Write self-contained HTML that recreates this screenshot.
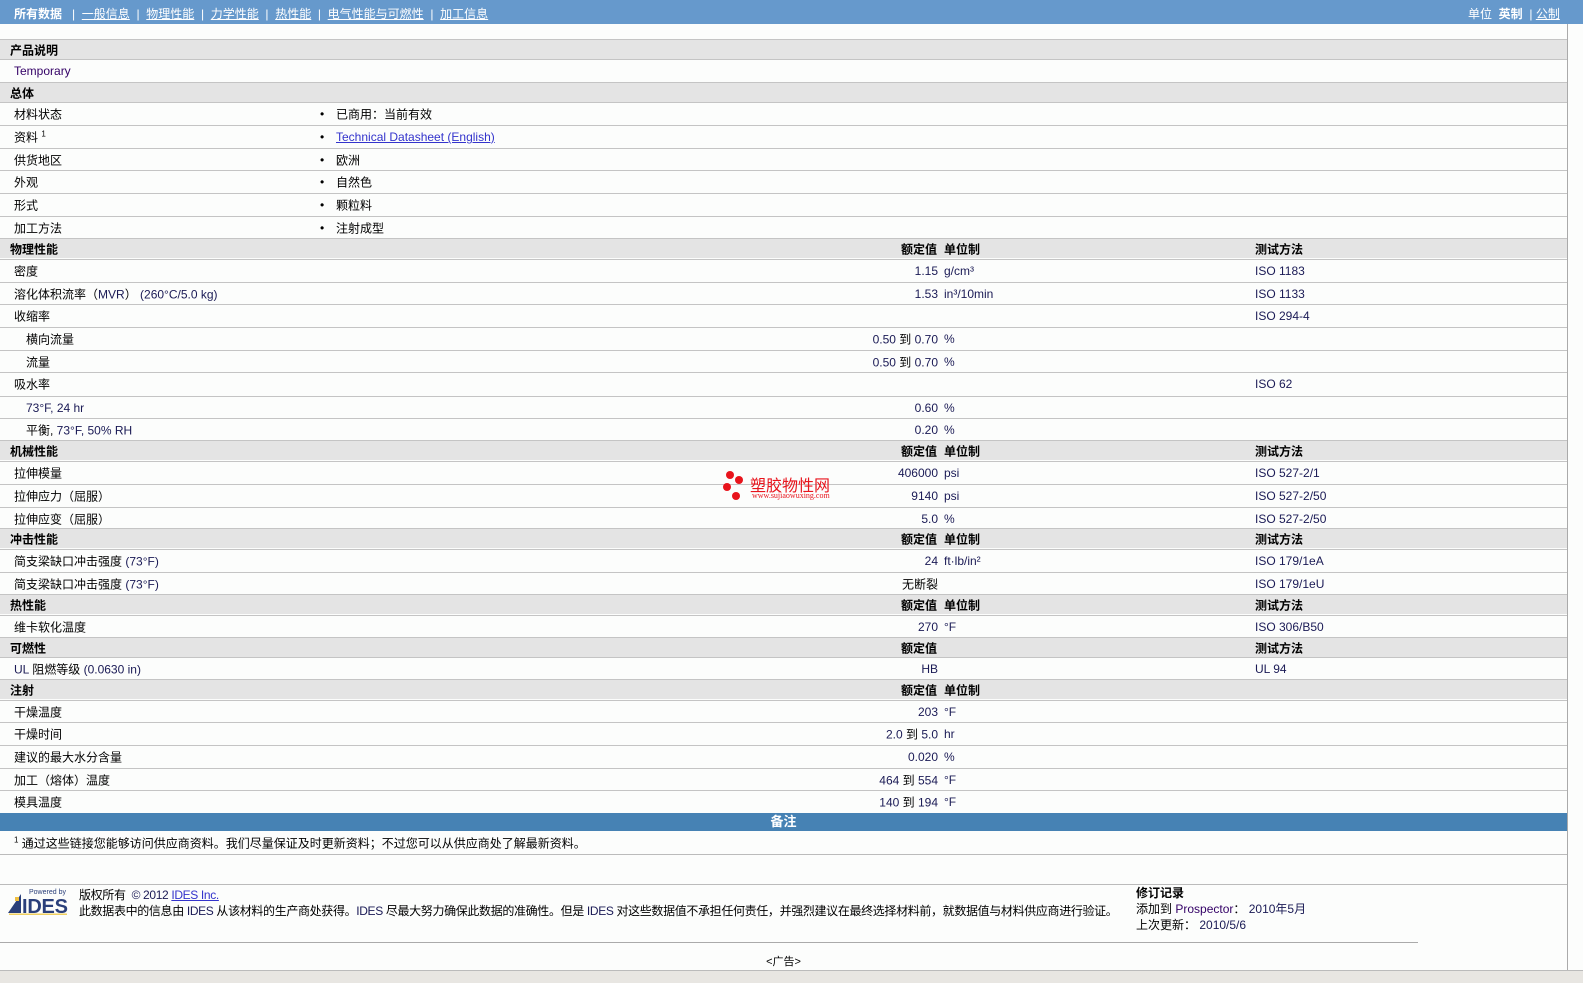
<!DOCTYPE html>
<html><head><meta charset="utf-8"><style>
body{margin:0;width:1583px;height:982px;background:#fcfdfc;font-family:"Liberation Sans","Noto Sans CJK SC",sans-serif;font-size:12px;color:#000;position:relative;overflow:hidden}
.top{position:absolute;left:0;top:0;width:1583px;height:24px;background:#6699cc;color:#fff}
.top span{position:absolute;top:5px;font-size:12px}
.top u{color:#fff}
.r{position:absolute;left:0;width:1567px;border-top:1px solid #c4c4c4;box-sizing:border-box}
.s{background:#e4e4e4;font-weight:bold;height:20px}
.d{height:23px}
.r span{position:absolute;top:50%;transform:translateY(-50%);white-space:nowrap}
.l{left:14px}.l2{left:26px}.sl{left:10px}
.b{left:320px}.bv{left:336px}
.v{right:629px;text-align:right;color:#1a1a55}
.u{left:944px;color:#1a1a55}
.t{left:1255px;color:#1a1a55}
.hv{right:630px}
.hu{left:944px}
.e{color:#1a1a55}
</style></head><body>
<div class="top">
<span style="left:14px;font-weight:bold">所有数据</span>
<span style="left:72px">|&nbsp; <u>一般信息</u> &nbsp;| &nbsp;<u>物理性能</u> &nbsp;| &nbsp;<u>力学性能</u> &nbsp;| &nbsp;<u>热性能</u> &nbsp;| &nbsp;<u>电气性能与可燃性</u> &nbsp;| &nbsp;<u>加工信息</u></span>
<span style="left:1468px">单位 &nbsp;<b>英制</b> &nbsp;| <u>公制</u></span>
</div>
<div style="position:absolute;left:1567px;top:24px;width:1px;height:950px;background:#aaa"></div>

<div class="r s" style="top:39px"><span class="sl">产品说明</span></div>
<div class="r d" style="top:59px"><span class="l e" style="color:#330066">Temporary</span></div>
<div class="r s" style="top:82px"><span class="sl">总体</span></div>
<div class="r d" style="top:102px"><span class="l">材料状态</span><span class="b">•</span><span class="bv">已商用：当前有效</span></div>
<div class="r d" style="top:125px"><span class="l">资料 <sup style="font-size:8px">1</sup></span><span class="b">•</span><span class="bv"><u style="color:#3333cc">Technical Datasheet (English)</u></span></div>
<div class="r d" style="top:148px"><span class="l">供货地区</span><span class="b">•</span><span class="bv">欧洲</span></div>
<div class="r d" style="top:170px"><span class="l">外观</span><span class="b">•</span><span class="bv">自然色</span></div>
<div class="r d" style="top:193px"><span class="l">形式</span><span class="b">•</span><span class="bv">颗粒料</span></div>
<div class="r d" style="top:216px"><span class="l">加工方法</span><span class="b">•</span><span class="bv">注射成型</span></div>

<div class="r s" style="top:238px"><span class="sl">物理性能</span><span class="hv">额定值</span><span class="hu">单位制</span><span class="t" style="color:#000">测试方法</span></div>
<div class="r d" style="top:259px"><span class="l">密度</span><span class="v">1.15</span><span class="u">g/cm³</span><span class="t">ISO 1183</span></div>
<div class="r d" style="top:282px"><span class="l">溶化体积流率（<span class="e" style="position:static;transform:none">MVR</span>） <span class="e" style="position:static;transform:none">(260°C/5.0 kg)</span></span><span class="v">1.53</span><span class="u">in³/10min</span><span class="t">ISO 1133</span></div>
<div class="r d" style="top:304px"><span class="l">收缩率</span><span class="t">ISO 294-4</span></div>
<div class="r d" style="top:327px"><span class="l2">横向流量</span><span class="v">0.50 <b style="font-weight:normal;color:#000">到</b> 0.70</span><span class="u">%</span></div>
<div class="r d" style="top:350px"><span class="l2">流量</span><span class="v">0.50 <b style="font-weight:normal;color:#000">到</b> 0.70</span><span class="u">%</span></div>
<div class="r d" style="top:372px"><span class="l">吸水率</span><span class="t">ISO 62</span></div>
<div class="r d" style="top:396px"><span class="l2 e">73°F, 24 hr</span><span class="v">0.60</span><span class="u">%</span></div>
<div class="r d" style="top:418px"><span class="l2">平衡, <span class="e" style="position:static;transform:none">73°F, 50% RH</span></span><span class="v">0.20</span><span class="u">%</span></div>

<div class="r s" style="top:440px"><span class="sl">机械性能</span><span class="hv">额定值</span><span class="hu">单位制</span><span class="t" style="color:#000">测试方法</span></div>
<div class="r d" style="top:461px"><span class="l">拉伸模量</span><span class="v">406000</span><span class="u">psi</span><span class="t">ISO 527-2/1</span></div>
<div class="r d" style="top:484px"><span class="l">拉伸应力（屈服）</span><span class="v">9140</span><span class="u">psi</span><span class="t">ISO 527-2/50</span></div>
<div class="r d" style="top:507px"><span class="l">拉伸应变（屈服）</span><span class="v">5.0</span><span class="u">%</span><span class="t">ISO 527-2/50</span></div>

<div class="r s" style="top:528px"><span class="sl">冲击性能</span><span class="hv">额定值</span><span class="hu">单位制</span><span class="t" style="color:#000">测试方法</span></div>
<div class="r d" style="top:549px"><span class="l">简支梁缺口冲击强度 <span class="e" style="position:static;transform:none">(73°F)</span></span><span class="v">24</span><span class="u">ft·lb/in²</span><span class="t">ISO 179/1eA</span></div>
<div class="r d" style="top:572px"><span class="l">简支梁缺口冲击强度 <span class="e" style="position:static;transform:none">(73°F)</span></span><span class="v" style="color:#000">无断裂</span><span class="t">ISO 179/1eU</span></div>

<div class="r s" style="top:594px"><span class="sl">热性能</span><span class="hv">额定值</span><span class="hu">单位制</span><span class="t" style="color:#000">测试方法</span></div>
<div class="r d" style="top:615px"><span class="l">维卡软化温度</span><span class="v">270</span><span class="u">°F</span><span class="t">ISO 306/B50</span></div>

<div class="r s" style="top:637px"><span class="sl">可燃性</span><span class="hv">额定值</span><span class="t" style="color:#000">测试方法</span></div>
<div class="r d" style="top:657px"><span class="l"><span class="e" style="position:static;transform:none">UL</span> 阻燃等级 <span class="e" style="position:static;transform:none">(0.0630 in)</span></span><span class="v">HB</span><span class="t">UL 94</span></div>

<div class="r s" style="top:679px"><span class="sl">注射</span><span class="hv">额定值</span><span class="hu">单位制</span></div>
<div class="r d" style="top:700px"><span class="l">干燥温度</span><span class="v">203</span><span class="u">°F</span></div>
<div class="r d" style="top:722px"><span class="l">干燥时间</span><span class="v">2.0 <b style="font-weight:normal;color:#000">到</b> 5.0</span><span class="u">hr</span></div>
<div class="r d" style="top:745px"><span class="l">建议的最大水分含量</span><span class="v">0.020</span><span class="u">%</span></div>
<div class="r d" style="top:768px"><span class="l">加工（熔体）温度</span><span class="v">464 <b style="font-weight:normal;color:#000">到</b> 554</span><span class="u">°F</span></div>
<div class="r d" style="top:790px;height:23px"><span class="l">模具温度</span><span class="v">140 <b style="font-weight:normal;color:#000">到</b> 194</span><span class="u">°F</span></div>

<div style="position:absolute;left:0;top:813px;width:1567px;height:18px;background:#4682b4;color:#fff;font-weight:bold;text-align:center;font-size:13px;line-height:17px">备注</div>
<div class="r" style="top:831px;height:24px;border-top:none;border-bottom:1px solid #bbb"><span class="l"><sup style="font-size:8px">1</sup> 通过这些链接您能够访问供应商资料。我们尽量保证及时更新资料；不过您可以从供应商处了解最新资料。</span></div>
<div style="position:absolute;left:0;top:884px;width:1567px;height:1px;background:#bbb"></div>

<svg style="position:absolute;left:7px;top:887px" width="64" height="28" viewBox="0 0 64 28">
<text x="22" y="7" font-family="Liberation Sans" font-size="7" fill="#2a3f7a">Powered by</text>
<polygon points="1,26 14,7 14,26" fill="#2a3f7a"/><rect x="8" y="10" width="4" height="4" fill="#f0c040"/>
<text x="15" y="26" font-family="Liberation Sans" font-weight="bold" font-size="20" fill="#2a3f7a" textLength="46">IDES</text>
<rect x="2" y="26.5" width="58" height="1.5" fill="#f0d060"/>
</svg>
<div style="position:absolute;left:79px;top:887px;line-height:16px;letter-spacing:-0.35px">版权所有 &nbsp;<span class="e">© 2012</span> <u style="color:#3333cc">IDES Inc.</u><br>此数据表中的信息由 <span class="e">IDES</span> 从该材料的生产商处获得。<span class="e">IDES</span> 尽最大努力确保此数据的准确性。但是 <span class="e">IDES</span> 对这些数据值不承担任何责任，并强烈建议在最终选择材料前，就数据值与材料供应商进行验证。</div>
<div style="position:absolute;left:1136px;top:885px;line-height:16px"><b>修订记录</b><br>添加到 <span class="e" style="color:#330066">Prospector</span>： <span class="e">2010年5月</span><br>上次更新： <span class="e">2010/5/6</span></div>
<div style="position:absolute;left:0;top:942px;width:1418px;height:1px;background:#aaa"></div>
<div style="position:absolute;left:0;top:953px;width:1567px;text-align:center;font-size:11px">&lt;广告&gt;</div>
<div style="position:absolute;left:0;top:970px;width:1583px;height:12px;background:#e8e6e2;border-top:1px solid #bbb"></div>

<div style="position:absolute;left:722px;top:470px">
<svg width="24" height="32"><circle cx="8" cy="5" r="4" fill="#e8141c"/><circle cx="17" cy="10" r="4" fill="#e8141c"/><circle cx="5" cy="17" r="4" fill="#e8141c"/><circle cx="14" cy="26" r="4" fill="#e8141c"/></svg>
<span style="position:absolute;left:28px;top:2px;color:#e8141c;font-size:16px;white-space:nowrap">塑胶物性网</span>
<span style="position:absolute;left:30px;top:21px;color:#e8141c;font-size:8px;font-family:'Liberation Serif',serif;white-space:nowrap">www.sujiaowuxing.com</span>
</div>
</body></html>
